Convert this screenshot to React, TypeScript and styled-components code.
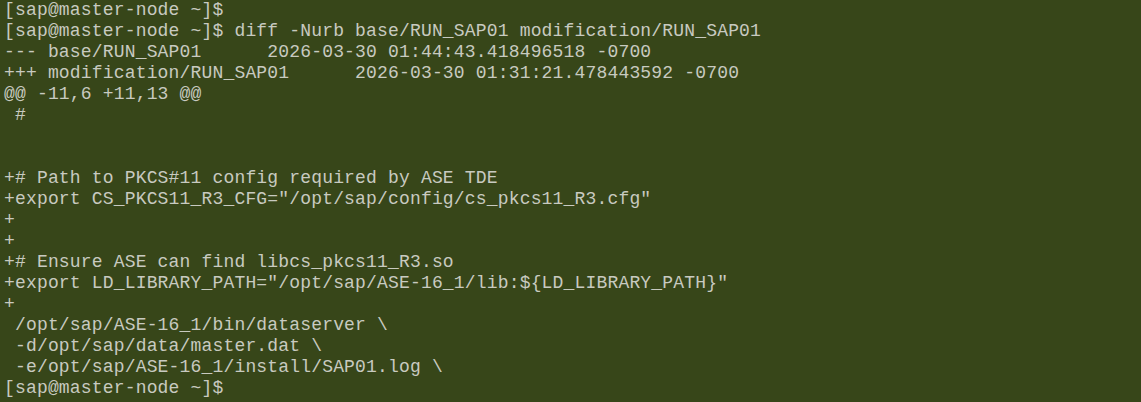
import React from "react";
import styled, { createGlobalStyle } from "styled-components";

const GlobalStyle = createGlobalStyle`
  html, body {
    margin: 0;
    padding: 0;
    background: #374619;
  }
  #root {
    min-height: 402px;
  }
`;

const Terminal = styled.div`
  box-sizing: border-box;
  width: 1141px;
  height: 402px;
  overflow: hidden;
  background: #374619;
  padding: 0 0 0 4px;
  display: flex;
  flex-direction: column;
`;

const Line = styled.pre`
  margin: 0;
  height: 21px;
  font-family: "Courier New", "Nimbus Mono PS", "Nimbus Mono L", "FreeMono",
    "Liberation Mono", monospace;
  font-size: 18px;
  letter-spacing: 0.17px;
  line-height: 21px;
  color: #c8cac0;
  white-space: pre;
`;

const lines: string[] = [
  "[sap@master-node ~]$",
  "[sap@master-node ~]$ diff -Nurb base/RUN_SAP01 modification/RUN_SAP01",
  "--- base/RUN_SAP01      2026-03-30 01:44:43.418496518 -0700",
  "+++ modification/RUN_SAP01      2026-03-30 01:31:21.478443592 -0700",
  "@@ -11,6 +11,13 @@",
  " #",
  "",
  "",
  "+# Path to PKCS#11 config required by ASE TDE",
  '+export CS_PKCS11_R3_CFG="/opt/sap/config/cs_pkcs11_R3.cfg"',
  "+",
  "+",
  "+# Ensure ASE can find libcs_pkcs11_R3.so",
  '+export LD_LIBRARY_PATH="/opt/sap/ASE-16_1/lib:${LD_LIBRARY_PATH}"',
  "+",
  " /opt/sap/ASE-16_1/bin/dataserver \\",
  " -d/opt/sap/data/master.dat \\",
  " -e/opt/sap/ASE-16_1/install/SAP01.log \\",
  "[sap@master-node ~]$",
];

export default function App() {
  return (
    <>
      <GlobalStyle />
      <Terminal>
        {lines.map((l, i) => (
          <Line key={i}>{l}</Line>
        ))}
      </Terminal>
    </>
  );
}
